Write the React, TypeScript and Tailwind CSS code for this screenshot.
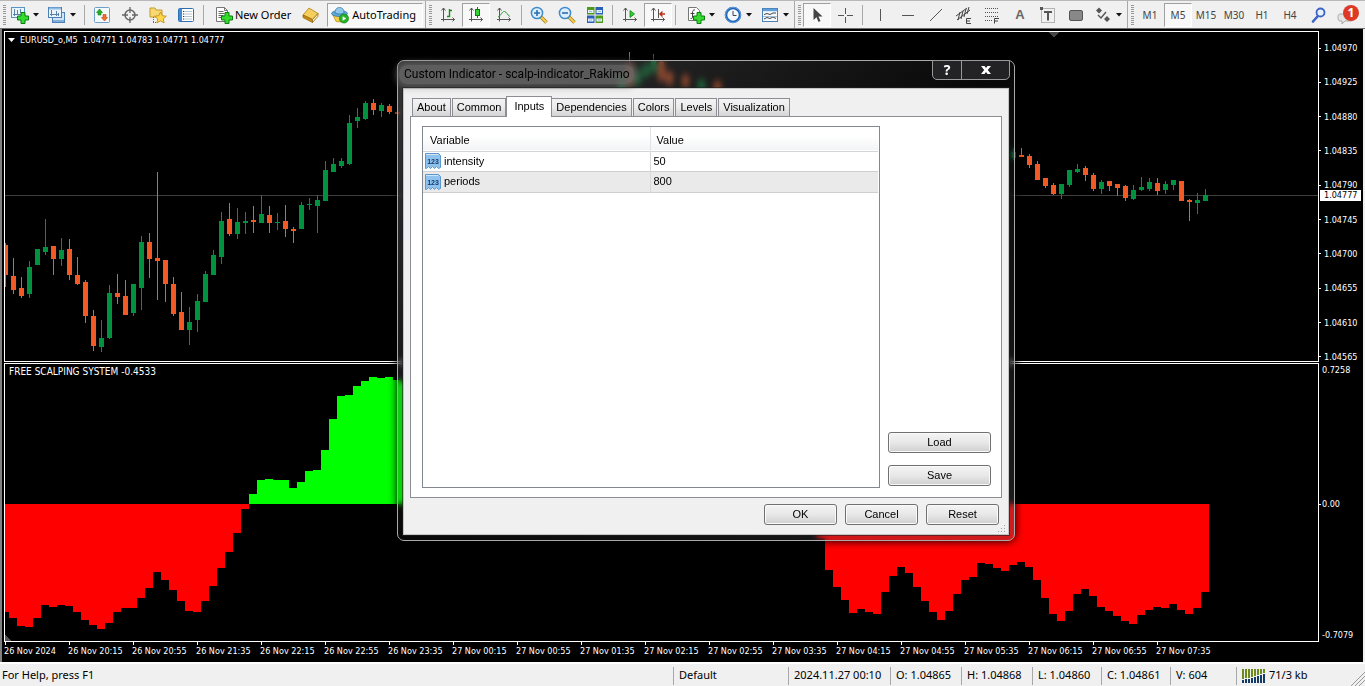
import React from 'react';

type Candle = [slot: number, high: number, top: number, bottom: number, low: number, color: 'g' | 'r'];

const candles: Candle[] = [
  [0, 243, 245, 275, 287, 'r'],
  [1, 258, 276, 290, 294, 'r'],
  [2, 277, 288, 296, 298, 'r'],
  [3, 261, 267, 294, 298, 'g'],
  [4, 249, 249, 265, 265, 'g'],
  [5, 219, 247, 252, 255, 'g'],
  [6, 246, 246, 259, 275, 'r'],
  [7, 238, 250, 259, 266, 'g'],
  [8, 239, 249, 275, 280, 'r'],
  [9, 257, 275, 284, 285, 'r'],
  [10, 280, 282, 316, 323, 'r'],
  [11, 310, 316, 346, 351, 'r'],
  [12, 320, 338, 347, 352, 'g'],
  [13, 285, 293, 338, 339, 'g'],
  [14, 274, 293, 297, 304, 'r'],
  [15, 280, 296, 315, 315, 'r'],
  [16, 284, 284, 313, 316, 'g'],
  [17, 236, 242, 288, 310, 'g'],
  [18, 233, 242, 259, 278, 'r'],
  [19, 172, 258, 261, 300, 'r'],
  [20, 260, 260, 284, 302, 'r'],
  [21, 277, 284, 314, 316, 'r'],
  [22, 292, 312, 330, 330, 'r'],
  [23, 307, 322, 330, 345, 'g'],
  [24, 294, 301, 320, 332, 'g'],
  [25, 271, 274, 302, 302, 'g'],
  [26, 250, 255, 275, 275, 'g'],
  [27, 212, 221, 257, 264, 'g'],
  [28, 203, 219, 234, 236, 'r'],
  [29, 208, 222, 234, 239, 'g'],
  [30, 212, 221, 223, 234, 'g'],
  [31, 206, 220, 222, 233, 'r'],
  [32, 195, 214, 223, 223, 'g'],
  [33, 206, 215, 223, 233, 'r'],
  [34, 213, 222, 223, 230, 'g'],
  [35, 205, 221, 229, 237, 'r'],
  [36, 227, 229, 231, 243, 'r'],
  [37, 202, 205, 229, 229, 'g'],
  [38, 198, 204, 205, 210, 'g'],
  [39, 195, 200, 206, 233, 'g'],
  [40, 161, 170, 201, 201, 'g'],
  [41, 158, 164, 172, 172, 'g'],
  [42, 158, 161, 166, 168, 'g'],
  [43, 115, 123, 164, 165, 'g'],
  [44, 108, 117, 121, 128, 'g'],
  [45, 101, 103, 119, 120, 'g'],
  [46, 99, 103, 110, 115, 'r'],
  [47, 103, 105, 111, 117, 'g'],
  [48, 104, 106, 112, 114, 'r'],
  [49, 112, 112, 114, 114, 'r'],
  [77, 70, 76, 100, 104, 'g'],
  [78, 52, 66, 84, 90, 'r'],
  [79, 66, 72, 84, 90, 'g'],
  [80, 62, 66, 76, 80, 'g'],
  [81, 54, 60, 72, 76, 'g'],
  [82, 60, 62, 80, 84, 'r'],
  [83, 70, 72, 84, 88, 'r'],
  [85, 72, 76, 86, 96, 'r'],
  [87, 78, 80, 92, 96, 'g'],
  [89, 78, 82, 96, 100, 'r'],
  [126, 148, 152, 158, 160, 'g'],
  [127, 148, 155, 157, 157, 'r'],
  [128, 154, 156, 165, 168, 'r'],
  [129, 161, 164, 180, 180, 'r'],
  [130, 178, 178, 186, 188, 'r'],
  [131, 183, 185, 194, 195, 'r'],
  [132, 184, 184, 194, 199, 'g'],
  [133, 170, 170, 185, 187, 'g'],
  [134, 164, 169, 172, 173, 'g'],
  [135, 166, 168, 175, 181, 'r'],
  [136, 173, 175, 189, 191, 'r'],
  [137, 180, 182, 189, 194, 'g'],
  [138, 181, 181, 186, 191, 'r'],
  [139, 184, 184, 188, 196, 'r'],
  [140, 185, 186, 198, 201, 'r'],
  [141, 185, 190, 199, 200, 'g'],
  [142, 177, 187, 190, 191, 'g'],
  [143, 178, 182, 189, 191, 'g'],
  [144, 178, 183, 191, 195, 'r'],
  [145, 181, 184, 190, 194, 'g'],
  [146, 180, 180, 185, 190, 'g'],
  [147, 181, 181, 201, 201, 'r'],
  [148, 199, 200, 202, 221, 'r'],
  [149, 193, 200, 203, 214, 'g'],
  [150, 189, 195, 201, 201, 'g'],
];

const ZERO_LEVEL = 504;

const leftBars = [
  612, 618, 626, 627, 618, 605, 607, 605, 606, 612, 620, 625, 629, 623, 612, 608, 608, 598, 588, 572,
  580, 590, 601, 611, 612, 601, 586, 568, 552, 533, 509, 494, 480, 479, 480, 480, 488, 482, 471, 470,
  450, 419, 396, 395, 386, 381, 377, 378, 377, 380, 382, 386,
];

const rightBars = [
  538, 570, 587, 600, 613, 609, 612, 614, 592, 576, 567, 573, 587, 601, 612, 620, 611, 594, 580, 577,
  563, 564, 568, 571, 565, 562, 567, 580, 598, 614, 621, 611, 594, 589, 596, 607, 611, 616, 621, 624,
  615, 610, 607, 608, 604, 610, 614, 608, 592,
];

const bars = [
  ...leftBars.map((level, i) => ({ slot: i, level })),
  ...rightBars.map((level, i) => ({ slot: i + 102, level })),
];

const prices = [
  '1.04970', '1.04925', '1.04880', '1.04835', '1.04790',
  '1.04745', '1.04700', '1.04655', '1.04610', '1.04565',
];

const times = [
  '26 Nov 2024', '26 Nov 20:15', '26 Nov 20:55', '26 Nov 21:35', '26 Nov 22:15', '26 Nov 22:55',
  '26 Nov 23:35', '27 Nov 00:15', '27 Nov 00:55', '27 Nov 01:35', '27 Nov 02:15', '27 Nov 02:55',
  '27 Nov 03:35', '27 Nov 04:15', '27 Nov 04:55', '27 Nov 05:35', '27 Nov 06:15', '27 Nov 06:55',
  '27 Nov 07:35',
];

const Icon = ({ children, size = 18 }: { children: React.ReactNode; size?: number }) => (
  <svg width={size} height={size} viewBox="0 0 18 18" fill="none" className="shrink-0" aria-hidden="true">
    {children}
  </svg>
);

const GreenPlus = () => (
  <path
    d="M10 6.5h4V10h3.500v4H14v3.500h-4V14H6.500v-4H10z"
    fill="#35dc2e"
    stroke="#0d7d12"
  />
);

const NewChartIcon = () => (
  <Icon>
    <rect x="0.5" y="1.5" width="13" height="10" fill="#eaf4fc" stroke="#5b93c4" />
    <path d="M3.5 3v7M2 8.5h9M6.5 4v4M9.5 3v4" stroke="#5b83a8" />
    <GreenPlus />
  </Icon>
);

const ProfilesIcon = () => (
  <Icon>
    <rect x="4.5" y="6.5" width="12" height="10" fill="#cfe4f6" stroke="#4a80b5" />
    <path d="M5 15h11" stroke="#7fb0dc" strokeWidth="2" />
    <rect x="0.5" y="1.5" width="13" height="10" fill="#eaf4fc" stroke="#4a80b5" />
    <path d="M1 2.5h12" stroke="#8fbce4" strokeWidth="2" />
    <path d="M3.5 4v6M2 8.5h9M8.5 5v5M10.5 7v3" stroke="#5b83a8" />
  </Icon>
);

const MarketWatchIcon = () => (
  <Icon>
    <rect x="1.5" y="1.5" width="15" height="15" rx="1" fill="#f4f9fd" stroke="#6fa0cc" />
    <path d="M6.500 3l3 3.500h-1.500V9H5V6.500H3.500z" fill="#27b027" stroke="#0d7d12" strokeWidth=".6" />
    <path d="M11.500 15L8.500 11.500H10V8.500h3v3h1.500z" fill="#f3702a" stroke="#b8420c" strokeWidth=".6" />
  </Icon>
);

const DataWindowIcon = () => (
  <Icon>
    <circle cx="9" cy="9" r="5" stroke="#666" strokeWidth="1.500" />
    <path d="M9 1v6M9 11v6M1 9h6M11 9h6" stroke="#666" strokeWidth="1.300" />
  </Icon>
);

const NavigatorIcon = () => (
  <Icon>
    <path d="M1 2h5l1 2h6v7H1z" fill="#f7d873" stroke="#c79a2a" />
    <path d="M4.500 11v6M4 16.500h5" stroke="#666" strokeDasharray="1 1" />
    <path d="M11.500 6l1.800 3.700 4 .5-3 2.700.8 4-3.600-2-3.600 2 .8-4-3-2.700 4-.5z" fill="#ffd84a" stroke="#b98614" strokeWidth=".8" />
  </Icon>
);

const TerminalIcon = () => (
  <Icon>
    <rect x="1.500" y="2.500" width="15" height="13" rx="1" fill="#fff" stroke="#2f6fae" />
    <path d="M3.500 3v12" stroke="#3f8bd6" strokeWidth="3" />
    <path d="M7 5.500h8M7 8h8M7 10.500h8M7 13h8" stroke="#b8c4d0" />
    <path d="M6 5.500h1M6 8h1M6 10.500h1M6 13h1" stroke="#333" />
  </Icon>
);

const NewOrderIcon = () => (
  <Icon>
    <path d="M1.500 1.500h8l3 3v11h-11z" fill="#fff" stroke="#777" />
    <path d="M9.500 1.500v3h3" stroke="#777" />
    <path d="M3.500 5.500h5M3.500 7.500h6M3.500 9.500h5M3.500 11.500h3" stroke="#666" />
    <GreenPlus />
  </Icon>
);

const MetaEditorIcon = () => (
  <Icon>
    <path d="M1 9l6-7 9 5.500-5.500 6z" fill="#f6ce5e" stroke="#b0800f" strokeWidth=".8" />
    <path d="M1 9v2.500l9.500 5v-3z" fill="#c58d17" stroke="#946608" strokeWidth=".8" />
    <path d="M10.500 13.500L16 7.500v2.700l-5.500 6.300z" fill="#fff2c0" stroke="#946608" strokeWidth=".8" />
  </Icon>
);

const AutoTradingIcon = () => (
  <Icon>
    <path d="M2 9l3 6.500 5 .5 5-7z" fill="#f4cd44" stroke="#b78d14" strokeWidth=".7" />
    <ellipse cx="8.500" cy="7.500" rx="8" ry="3" fill="#5ea8d8" stroke="#2c6f9f" strokeWidth=".7" />
    <path d="M4 7c0-4 2-5.500 4.500-5.500S13 3 13 7c-2 1.300-7 1.300-9 0z" fill="#8fc8ec" stroke="#2c6f9f" strokeWidth=".7" />
    <circle cx="13" cy="12.500" r="4.500" fill="#28b428" stroke="#0d7d12" strokeWidth=".7" />
    <path d="M11.600 10.200v4.600l3.600-2.300z" fill="#fff" />
  </Icon>
);

const Axes = () => (
  <path d="M4.500 2v13.500M2 13.500h13.500M2.500 4.500l2-2.500 2 2.500M13.500 11.500l2 2-2 2" stroke="#555" />
);

const BarChartIcon = () => (
  <Icon>
    <Axes />
    <path d="M10.500 3v8M10.500 4.500h2.500M8 10.500h2.500" stroke="#1c8a1c" strokeWidth="1.400" />
  </Icon>
);

const CandleChartIcon = () => (
  <Icon>
    <Axes />
    <path d="M10.500 1v11" stroke="#0d7d12" />
    <rect x="8.500" y="3.500" width="4" height="6" fill="#2fd42f" stroke="#0d7d12" />
  </Icon>
);

const LineChartIcon = () => (
  <Icon>
    <Axes />
    <path d="M3 11c3-1 4-6 6.500-5.500S12 9 15 10.500" stroke="#2c9a2c" />
  </Icon>
);

const ZoomIcon = ({ plus }: { plus?: boolean }) => (
  <Icon>
    <path d="M11 11l5.500 5.500" stroke="#a57c12" strokeWidth="3.400" />
    <path d="M11 11l5.500 5.500" stroke="#f4d354" strokeWidth="1.800" />
    <circle cx="7" cy="7" r="5.600" fill="#dceefb" stroke="#3f8ac8" strokeWidth="1.500" />
    <path d={plus ? 'M4 7h6M7 4v6' : 'M4 7h6'} stroke="#2b6fb0" strokeWidth="1.600" />
  </Icon>
);

const TileIcon = () => (
  <Icon>
    <rect x="1" y="1" width="7.500" height="7.500" fill="#4f9a1c" />
    <rect x="9.500" y="1" width="7.500" height="7.500" fill="#2a5fb8" />
    <rect x="1" y="9.500" width="7.500" height="7.500" fill="#2a5fb8" />
    <rect x="9.500" y="9.500" width="7.500" height="7.500" fill="#4f9a1c" />
    <path d="M2 5.500h5.500M10.500 5.500H16M2 14h5.500M10.500 14H16" stroke="#e6f0f8" strokeWidth="3" />
    <path d="M3 5.500h3M12 5.500h3M3 14h3M12 14h3" stroke="#9db8d0" />
  </Icon>
);

const AutoScrollIcon = () => (
  <Icon>
    <Axes />
    <path d="M9 4.500l4.500 3.500L9 11.500z" fill="#2fd42f" stroke="#0d7d12" strokeWidth=".8" />
  </Icon>
);

const ChartShiftIcon = () => (
  <Icon>
    <Axes />
    <path d="M9.500 3v9" stroke="#555" />
    <path d="M11 8h5M13.500 5.500L11 8l2.500 2.500" stroke="#c22a10" strokeWidth="1.400" />
  </Icon>
);

const IndicatorsIcon = () => (
  <Icon>
    <path d="M1.500 1.500h8l3 3v10h-11z" fill="#fff" stroke="#777" />
    <path d="M8 4C6 3.500 5.500 5 5.500 7v4c0 1.500-1 1.800-2 1.500M3.500 7.500h4" stroke="#444" />
    <GreenPlus />
  </Icon>
);

const PeriodsIcon = () => (
  <Icon>
    <circle cx="9" cy="9" r="7" fill="#f4fafe" stroke="#1f62b8" strokeWidth="2.600" />
    <circle cx="9" cy="9" r="7.600" stroke="#79b4ec" strokeWidth=".7" />
    <path d="M9 5v4.500h3.500" stroke="#444" />
  </Icon>
);

const TemplatesIcon = () => (
  <Icon>
    <rect x="1.500" y="2.500" width="15" height="13" fill="#f6fafd" stroke="#4a80b5" />
    <path d="M2 4h14" stroke="#5f9fdc" strokeWidth="2.400" />
    <path d="M3 8.500l3-1 3 1 3-1.500 3 0M3 13l3-1.500 3 1 3-1.500 3 1.500" stroke="#444" />
    <path d="M2 10.500h14" stroke="#9cc0de" />
  </Icon>
);

const CursorIcon = () => (
  <Icon>
    <path d="M5.500 2v12l3-2.800 2 4.800 2-.9-2-4.600h4z" fill="#444" />
  </Icon>
);

const CrosshairIcon = () => (
  <Icon>
    <path d="M9.500 2v6M9.500 11v6M2 9.500h6M11 9.500h6" stroke="#555" />
  </Icon>
);

const ChannelIcon = () => (
  <Icon>
    <path d="M1 10L12 2M2 14L15 4" stroke="#444" />
    <path d="M3 14l2-8M6 13l2-8M9 11l2-8M12 8l2-7" stroke="#444" />
    <path d="M16 12.500h-4.500v5H16M11.500 15H15" stroke="#444" />
  </Icon>
);

const FibonacciIcon = () => (
  <Icon>
    <path d="M2 2.500h14M2 6.500h14M2 10.500h14M2 14.500h7" stroke="#555" strokeDasharray="1 1" />
    <path d="M16 12.500h-4.500v5M11.500 15H15" stroke="#444" />
  </Icon>
);

const TextLabelIcon = () => (
  <Icon>
    <rect x="2.500" y="2.500" width="13" height="14" stroke="#777" strokeDasharray="1 1" />
    <path d="M5 6h8M9 6v8.500" stroke="#555" strokeWidth="2" />
    <rect x="1" y="1" width="3" height="3" fill="#555" />
  </Icon>
);

const ShapeIcon = () => (
  <Icon>
    <rect x="2.500" y="4.500" width="13" height="10" rx="1.500" fill="#888" stroke="#555" />
  </Icon>
);

const ArrowsIcon = () => (
  <Icon>
    <path d="M5 1.500L8 4.500 5 7.500 2 4.500zM13 10l3 3-3 3-3-3z" fill="#555" />
    <path d="M4 9l3 3 5-6" stroke="#555" strokeWidth="1.400" />
  </Icon>
);

const Caret = () => (
  <svg width="6" height="4" viewBox="0 0 6 4" aria-hidden="true">
    <path d="M0 0h6L3 3.500z" fill="#111" />
  </svg>
);

const ToolButton = ({ label, pressed, children }: { label: string; pressed?: boolean; children: React.ReactNode }) => (
  <button
    aria-label={label}
    title={label}
    className={`flex h-6 w-7 shrink-0 items-center justify-center text-[10px] text-[#444] ${
      pressed ? 'border border-r-white border-b-white border-t-[#a0a0a0] border-l-[#a0a0a0] bg-[#f8f8f8]' : ''
    }`}
  >
    {children}
  </button>
);

const DropButton = ({ label, children }: { label: string; children: React.ReactNode }) => (
  <button aria-label={label} title={label} className="flex h-6 w-[37px] shrink-0 items-center gap-1 pl-1">
    {children}
    <Caret />
  </button>
);

const Separator = () => <span className="mx-[3px] h-5 w-px shrink-0 bg-[#a8a8a8]" />;

const Grip = () => (
  <span className="mr-0.5 ml-[3px] flex h-5 w-[3px] shrink-0 flex-col justify-between">
    {Array.from({ length: 10 }, (_, i) => (
      <span key={i} className="h-px w-full bg-[#999]" />
    ))}
  </span>
);

const BarEnd = () => <span className="h-7 w-px shrink-0 bg-[#a8a8a8]" />;

const Toolbar = () => (
  <header className="flex h-[29px] shrink-0 items-center overflow-hidden border-t border-b border-t-[#b8b8b8] border-b-[#6e6e6e] bg-[#f0f0f0] pt-px font-['Noto_Sans',sans-serif]">
    <Grip />
    <div className="-ml-px flex items-center">
      <DropButton label="New chart"><NewChartIcon /></DropButton>
      <DropButton label="Profiles"><ProfilesIcon /></DropButton>
    </div>
    <Separator />
    <ToolButton label="Market Watch"><MarketWatchIcon /></ToolButton>
    <ToolButton label="Data Window"><DataWindowIcon /></ToolButton>
    <ToolButton label="Navigator"><NavigatorIcon /></ToolButton>
    <ToolButton label="Terminal"><TerminalIcon /></ToolButton>
    <Separator />
    <button className="flex h-6 shrink-0 items-center gap-0.5 pr-1.5 pl-2 text-[11px] whitespace-nowrap text-black">
      <NewOrderIcon />
      New Order
    </button>
    <ToolButton label="MetaEditor"><MetaEditorIcon /></ToolButton>
    <button className="ml-0.5 flex h-6 shrink-0 items-center gap-[3px] border border-t-[#a0a0a0] border-r-white border-b-white border-l-[#a0a0a0] bg-[#f8f8f8] pr-1.5 pl-[3px] text-[11px] whitespace-nowrap text-black">
      <AutoTradingIcon />
      AutoTrading
    </button>
    <span className="ml-0.5 flex"><BarEnd /></span>
    <Grip />
    <ToolButton label="Bar chart"><BarChartIcon /></ToolButton>
    <ToolButton label="Candlesticks" pressed><CandleChartIcon /></ToolButton>
    <ToolButton label="Line chart"><LineChartIcon /></ToolButton>
    <Separator />
    <ToolButton label="Zoom in"><ZoomIcon plus /></ToolButton>
    <ToolButton label="Zoom out"><ZoomIcon /></ToolButton>
    <ToolButton label="Tile windows"><TileIcon /></ToolButton>
    <Separator />
    <ToolButton label="Auto scroll"><AutoScrollIcon /></ToolButton>
    <ToolButton label="Chart shift" pressed><ChartShiftIcon /></ToolButton>
    <Separator />
    <div className="ml-1 flex items-center">
      <DropButton label="Indicators"><IndicatorsIcon /></DropButton>
      <DropButton label="Periods"><PeriodsIcon /></DropButton>
      <DropButton label="Templates"><TemplatesIcon /></DropButton>
    </div>
    <BarEnd />
    <Grip />
    <ToolButton label="Cursor" pressed><CursorIcon /></ToolButton>
    <ToolButton label="Crosshair"><CrosshairIcon /></ToolButton>
    <Separator />
    <ToolButton label="Vertical line"><Icon><path d="M9.500 3v12" stroke="#555" /></Icon></ToolButton>
    <ToolButton label="Horizontal line"><Icon><path d="M3 9.500h12" stroke="#555" /></Icon></ToolButton>
    <ToolButton label="Trendline"><Icon><path d="M3 15L15 3" stroke="#555" /></Icon></ToolButton>
    <ToolButton label="Equidistant channel"><ChannelIcon /></ToolButton>
    <ToolButton label="Fibonacci retracement"><FibonacciIcon /></ToolButton>
    <ToolButton label="Text"><span className="font-['Liberation_Sans',sans-serif] text-[13px] font-bold text-[#666]">A</span></ToolButton>
    <ToolButton label="Text label"><TextLabelIcon /></ToolButton>
    <ToolButton label="Shapes"><ShapeIcon /></ToolButton>
    <DropButton label="Arrows"><ArrowsIcon /></DropButton>
    <BarEnd />
    <Grip />
    <ToolButton label="1 minute">M1</ToolButton>
    <ToolButton label="5 minutes" pressed>M5</ToolButton>
    <ToolButton label="15 minutes">M15</ToolButton>
    <ToolButton label="30 minutes">M30</ToolButton>
    <ToolButton label="1 hour">H1</ToolButton>
    <ToolButton label="4 hours">H4</ToolButton>
    <div className="ml-auto flex items-center">
      <ToolButton label="Search">
        <Icon>
          <path d="M7.500 10.500L3 15.500" stroke="#3b63c4" strokeWidth="2.600" strokeLinecap="round" />
          <circle cx="10.500" cy="6.500" r="4" fill="#e8f0fc" stroke="#3b63c4" strokeWidth="1.800" />
        </Icon>
      </ToolButton>
      <button aria-label="Messages" className="relative h-7 w-8">
        <svg width="18" height="14" viewBox="0 0 18 14" className="absolute bottom-1 left-1" aria-hidden="true">
          <path d="M3 3h11c2 0 3 1.500 3 3.500S16 10 14 10H8l-3 3v-3H3C1.500 10 1 8.500 1 6.500S1.500 3 3 3z" fill="#e4e4e4" stroke="#aaa" />
        </svg>
        <span className="absolute top-1 right-1.5 flex h-4 w-4 items-center justify-center rounded-full bg-[#dd3a26] text-[12px] leading-none font-bold text-white">
          1
        </span>
      </button>
    </div>
  </header>
);

const PriceChart = () => (
  <section className="flex min-h-0 flex-[331]">
    <div className="relative min-w-0 flex-1 border border-white">
      <svg viewBox="5 32 1313 329" preserveAspectRatio="none" shapeRendering="crispEdges" className="block h-full w-full">
        <rect x="5" y="195" width="1313" height="1" fill="#3c3c3c" />
        {candles.map(([slot, high, top, bottom, low, color]) => {
          const x = 5 + slot * 8;
          const fill = color === 'g' ? '#00923f' : '#f15a24';
          return (
            <g key={slot} fill={fill}>
              <rect x={x} y={high} width="1" height={low - high} />
              <rect x={x - 2} y={top} width="5" height={bottom - top} />
            </g>
          );
        })}
        <path d="M1048 32h11l-5 5z" fill="#444" />
      </svg>
      <div className="absolute top-0.5 left-0.5 flex items-center gap-1 text-[9px] leading-[12px] whitespace-pre text-white">
        <svg width="9" height="5" viewBox="0 0 9 5" aria-hidden="true"><path d="M1 0h7L4.500 4z" fill="#fff" /></svg>
        EURUSD_o,M5  1.04771 1.04783 1.04771 1.04777
      </div>
    </div>
    <div className="relative flex w-11 shrink-0 flex-col justify-between pt-3">
      {prices.map((price) => (
        <div key={price} className="flex items-center gap-[3px] leading-[10px]">
          <span className="h-px w-0.5 bg-white" />
          {price}
        </div>
      ))}
      <span className="absolute top-[159px] left-px bg-white pr-1 pl-1 leading-[11px] text-black">1.04777</span>
    </div>
  </section>
);

const IndicatorChart = () => (
  <section className="mt-px flex min-h-0 flex-[279]">
    <div className="relative min-w-0 flex-1 border border-white">
      <svg viewBox="5 364 1313 277" preserveAspectRatio="none" shapeRendering="crispEdges" className="block h-full w-full">
        {bars.map(({ slot, level }) => (
          <rect
            key={slot}
            x={1 + slot * 8}
            y={Math.min(level, ZERO_LEVEL)}
            width="8"
            height={Math.abs(level - ZERO_LEVEL)}
            fill={level > ZERO_LEVEL ? '#ff0000' : '#00ff00'}
          />
        ))}
        <path d="M5 634l6 7H5z" fill="#555" />
      </svg>
      <p className="absolute top-0.5 left-1 text-[10px] leading-[12px]">FREE SCALPING SYSTEM -0.4533</p>
    </div>
    <div className="flex w-11 shrink-0 flex-col leading-[10px]">
      <div className="flex-[136] pt-0.5 pl-[3px]">0.7258</div>
      <div className="flex flex-[143] flex-col justify-between pb-0.5">
        <div className="flex items-center gap-px">
          <span className="h-px w-0.5 bg-white" />
          0.00
        </div>
        <div className="pl-[3px]">-0.7079</div>
      </div>
    </div>
  </section>
);

const TimeAxis = () => (
  <div className="flex h-5 shrink-0 overflow-hidden">
    {times.map((time) => (
      <div key={time} className="w-16 shrink-0 whitespace-nowrap">
        <span className="ml-px block h-[3px] w-px bg-white" />
        <span className="block leading-[12px]">{time}</span>
      </div>
    ))}
  </div>
);

const tabs = ['About', 'Common', 'Inputs', 'Dependencies', 'Colors', 'Levels', 'Visualization'];

const inputs = [
  { name: 'intensity', value: '50' },
  { name: 'periods', value: '800' },
];

const NumberIcon = () => (
  <svg width="16" height="16" viewBox="0 0 16 16" className="shrink-0" aria-hidden="true">
    <path d="M0.500 0.500h13l2 2v12l-2 1-2-2-2 2-2-2-2 2-2-2-2 2H.5z" fill="#8fc3ee" stroke="#5b97cc" />
    <path d="M1 1.500h12" stroke="#cfe6f8" />
    <text x="8" y="11" textAnchor="middle" fontSize="7" fontWeight="bold" fill="#123a6b" fontFamily="Liberation Sans, sans-serif">123</text>
  </svg>
);

const DialogButton = ({ children, wide }: { children: React.ReactNode; wide?: boolean }) => (
  <button
    className={`h-[21px] rounded-[3px] border border-[#707070] bg-linear-to-b from-[#f4f4f4] via-[#e8e8e8] to-[#cfcfcf] leading-none shadow-[inset_0_0_0_1px_#fafafa] ${
      wide ? 'w-[103px]' : 'w-[73px]'
    }`}
  >
    {children}
  </button>
);

const IndicatorDialog = () => (
  <div
    role="dialog"
    aria-labelledby="dialog-title"
    className="absolute top-[60px] left-[397px] w-[618px] rounded-[7px] border border-[#a9a9a9] bg-linear-to-br from-[#6a6a6a]/50 via-[#2a2a2a]/20 to-[#606068]/30 px-[5px] pb-[5px] font-['Liberation_Sans',sans-serif] text-[11px] text-black shadow-[0_0_8px_#000] backdrop-blur-[3px]"
  >
    <div className="flex h-[27px] justify-between">
      <h1
        id="dialog-title"
        className="my-1 -ml-1 rounded-lg bg-[#6c6c6c]/75 pr-1 pl-[5px] font-['Roboto',sans-serif] text-[12px] leading-[19px] whitespace-nowrap shadow-[0_0_6px_3px_#6c6c6ca0]"
      >
        Custom Indicator - scalp-indicator_Rakimo
      </h1>
      <div className="-mt-px mr-[-1px] flex h-5 rounded-b-[5px] border border-[#999] bg-[#333338]/60 text-white">
        <button aria-label="Help" className="w-[29px] border-r border-[#999] font-['Noto_Sans',sans-serif] text-[14px] leading-none font-bold">?</button>
        <button aria-label="Close" className="flex w-[47px] items-center justify-center">
          <svg width="12" height="10" viewBox="0 0 12 10" aria-hidden="true">
            <path d="M1 1h3.500L6 3 7.500 1H11L7.800 5 11 9H7.500L6 7 4.500 9H1L4.200 5z" fill="#fff" />
          </svg>
        </button>
      </div>
    </div>
    <div className="border border-[#c4c4c4] outline outline-[#222]/60 bg-[#f0f0f0] px-1.5 pt-[7px] pb-[9px]">
      <div role="tablist" className="flex h-5 items-end pl-0.5">
        {tabs.map((tab) => (
          <button
            key={tab}
            role="tab"
            aria-selected={tab === 'Inputs'}
            className={
              tab === 'Inputs'
                ? 'relative -mx-px -mb-px h-[21px] border border-b-0 border-[#8c8e94] bg-white px-[7px] pb-0.5'
                : 'mr-px h-[18px] border border-b-0 border-[#8c8e94] bg-linear-to-b from-[#f3f3f3] via-[#ebebeb] to-[#d4d4d4] px-1 leading-none'
            }
          >
            {tab}
          </button>
        ))}
      </div>
      <div className="flex gap-2 border border-[#8c8e94] bg-white pt-[9px] pr-2.5 pb-[9px] pl-[11px]">
        <div className="h-[362px] flex-1 border border-[#828790] pr-px">
          <table className="w-full table-fixed border-collapse text-left">
            <thead>
              <tr className="h-6 border-b border-[#d5d5d5] bg-linear-to-b from-white from-40% to-[#f3f4f6]">
                <th className="w-[227px] border-r border-[#e0e3e6] pt-0.5 pl-[7px] font-normal">Variable</th>
                <th className="pt-0.5 pl-1.5 font-normal">Value</th>
              </tr>
            </thead>
            <tbody>
              {inputs.map(({ name, value }, i) => (
                <tr key={name} className={i % 2 ? 'h-[21px] border-y border-[#cfcfcf] bg-[#eaeaea]' : 'h-5'}>
                  <td className="border-r border-[#d8d8d8] p-0 pl-0.5">
                    <span className="flex items-center gap-[3px]">
                      <NumberIcon />
                      {name}
                    </span>
                  </td>
                  <td className="p-0 pl-[3px]">{value}</td>
                </tr>
              ))}
            </tbody>
          </table>
        </div>
        <div className="flex flex-col justify-end gap-3 pb-0.5">
          <DialogButton wide>Load</DialogButton>
          <DialogButton wide>Save</DialogButton>
        </div>
      </div>
      <div className="relative flex justify-end gap-2 pt-1.5 pr-[3px]">
        <DialogButton>OK</DialogButton>
        <DialogButton>Cancel</DialogButton>
        <DialogButton>Reset</DialogButton>
        <svg width="9" height="9" viewBox="0 0 9 9" className="absolute -right-1 -bottom-2" aria-hidden="true">
          <path d="M7 1h1v1H7zM4 4h1v1H4zM7 4h1v1H7zM1 7h1v1H1zM4 7h1v1H4zM7 7h1v1H7z" fill="#a0a0a0" />
        </svg>
      </div>
    </div>
  </div>
);

const StatusCell = ({ children, className }: { children?: React.ReactNode; className: string }) => (
  <span className={`flex h-[18px] shrink-0 items-center border-l border-[#a8a8a8] pl-[5px] whitespace-nowrap ${className}`}>
    {children}
  </span>
);

const StatusBar = () => (
  <footer className="relative flex h-6 shrink-0 items-center border-t-2 border-white bg-[#f0f0f0] pt-px font-['Noto_Sans',sans-serif] text-[11px] text-black">
    <span className="flex-1 truncate pl-0.5">For Help, press F1</span>
    <StatusCell className="w-[115px]">Default</StatusCell>
    <StatusCell className="w-[102px]">2024.11.27 00:10</StatusCell>
    <StatusCell className="w-[71px]">O: 1.04865</StatusCell>
    <StatusCell className="w-[71px]">H: 1.04868</StatusCell>
    <StatusCell className="w-[69px]">L: 1.04860</StatusCell>
    <StatusCell className="w-[69px]">C: 1.04861</StatusCell>
    <StatusCell className="w-[66px]">V: 604</StatusCell>
    <StatusCell className="w-[129px] gap-1">
      <svg width="23" height="14" viewBox="0 0 23 14" shapeRendering="crispEdges" aria-hidden="true">
        {[10, 9, 9, 8, 7, 6, 5, 4].map((split, i) => (
          <g key={i}>
            <rect x={i * 3} y="0" width="2" height={split} fill="#6d8a1c" />
            <rect x={i * 3} y={split + 1} width="2" height={13 - split} fill="#123c66" />
          </g>
        ))}
      </svg>
      71/3 kb
    </StatusCell>
    <svg width="14" height="14" viewBox="0 0 14 14" className="absolute right-0 bottom-0" aria-hidden="true">
      <path d="M14 0L0 14M14 4L4 14M14 8l-6 6" stroke="#999" />
    </svg>
  </footer>
);

export default function App() {
  return (
    <div className="relative flex h-screen flex-col overflow-hidden bg-[#f0f0f0]">
      <Toolbar />
      <main className="flex min-h-0 flex-1 flex-col border-r-2 border-l-2 border-l-[#808080] border-r-[#f0f0f0] bg-black pt-0.5 pl-0.5 font-['DejaVu_Sans_Condensed',sans-serif] text-[9px] text-white">
        <PriceChart />
        <IndicatorChart />
        <TimeAxis />
      </main>
      <StatusBar />
      <IndicatorDialog />
    </div>
  );
}
